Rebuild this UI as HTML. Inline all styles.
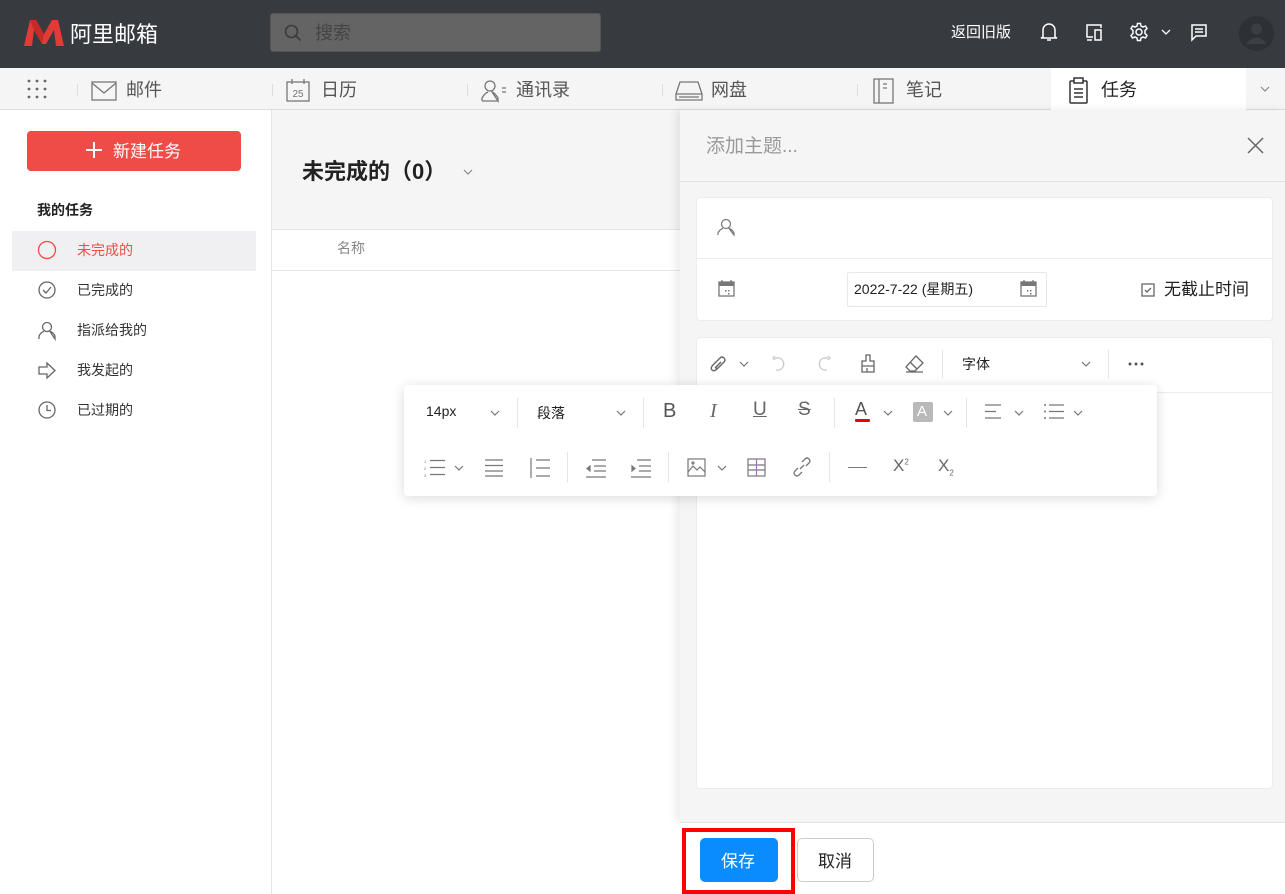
<!DOCTYPE html>
<html><head><meta charset="utf-8"><style>
*{margin:0;padding:0;box-sizing:border-box}
body{width:1285px;height:894px;overflow:hidden;font-family:"Liberation Sans","Noto Sans CJK SC",sans-serif;background:#fff;position:relative;color:#333}
.a{position:absolute}
svg{position:absolute;overflow:visible}
.t{position:absolute;white-space:nowrap;margin-top:-2px}
</style></head><body>
<!-- top bar -->
<div class="a" style="left:0;top:0;width:1285px;height:68px;background:#373b40"></div>
<svg style="left:22px;top:18px" width="44" height="30" viewBox="0 0 44 30"><path d="M2 28 L8 2 L14 2 L22 16 L30 2 L36 2 L42 28 L34 28 L32 12 L24 26 L20 26 L12 12 L10 28 Z" fill="#e23a36"/><path d="M8 2 L14 2 L22 16 L20 26 L12 12Z" fill="#c42a27"/></svg>
<div class="t" style="left:70px;top:19px;font-size:22px;color:#fff">阿里邮箱</div>
<div class="a" style="left:270px;top:13px;width:331px;height:39px;background:#646464;border-radius:3px;border:1px solid #555"></div>
<svg style="left:284px;top:24px" width="18" height="18"><circle cx="7.5" cy="7.5" r="6" fill="none" stroke="#3a3a3a" stroke-width="1.6"/><path d="M12 12 L16.5 16.5" stroke="#3a3a3a" stroke-width="1.6"/></svg>
<div class="t" style="left:315px;top:21px;font-size:18px;color:#444">搜索</div>
<div class="t" style="left:951px;top:23px;font-size:15px;color:#fff">返回旧版</div>
<svg style="left:1040px;top:22px" width="18" height="20" fill="none" stroke="#fff" stroke-width="1.5"><path d="M3 15 L3 8 A6 6 0 0 1 15 8 L15 15 L17 16 L1 16 Z M7 18 L11 18"/></svg>
<svg style="left:1085px;top:23px" width="20" height="18" fill="none" stroke="#fff" stroke-width="1.5"><path d="M8 14 L2 14 L2 2 L16 2 L16 5 M7 17 L2 17"/><rect x="10" y="7" width="6" height="10"/></svg>
<svg style="left:1129px;top:22px" width="20" height="20" fill="none" stroke="#fff" stroke-width="1.5"><circle cx="10" cy="10" r="3"/><path d="M8.5 1.5 L11.5 1.5 L12 4 L14 5 L16.5 4 L18 6.5 L16 8.5 L16 11.5 L18 13.5 L16.5 16 L14 15 L12 16 L11.5 18.5 L8.5 18.5 L8 16 L6 15 L3.5 16 L2 13.5 L4 11.5 L4 8.5 L2 6.5 L3.5 4 L6 5 L8 4 Z"/></svg>
<svg style="left:1161px;top:29px" width="10" height="6" fill="none" stroke="#fff" stroke-width="1.3"><path d="M1 1 L5 5 L9 1"/></svg>
<svg style="left:1190px;top:23px" width="18" height="18" fill="none" stroke="#fff" stroke-width="1.5"><path d="M2 2 L16 2 L16 13 L6 13 L2 17 Z M5 6 L13 6 M5 9 L13 9"/></svg>
<div class="a" style="left:1239px;top:16px;width:35px;height:35px;border-radius:50%;background:#2d3034"></div>
<svg style="left:1239px;top:16px" width="35" height="35"><circle cx="17.5" cy="13" r="5.5" fill="#3b3f44"/><path d="M7 28 Q17.5 15 28 28 Z" fill="#3b3f44"/></svg>

<!-- nav -->
<div class="a" style="left:0;top:68px;width:1285px;height:42px;background:#f5f5f5;border-bottom:1px solid #ddd"></div>
<div class="a" style="left:1051px;top:68px;width:195px;height:42px;background:#fff"></div>
<svg style="left:27px;top:79px" width="20" height="20" fill="#666"><circle cx="2" cy="2" r="1.4"/><circle cx="10" cy="2" r="1.4"/><circle cx="18" cy="2" r="1.4"/><circle cx="2" cy="10" r="1.4"/><circle cx="10" cy="10" r="1.4"/><circle cx="18" cy="10" r="1.4"/><circle cx="2" cy="18" r="1.4"/><circle cx="10" cy="18" r="1.4"/><circle cx="18" cy="18" r="1.4"/></svg>
<div class="a" style="left:77px;top:84px;width:1px;height:12px;background:#ddd"></div>
<div class="a" style="left:272px;top:84px;width:1px;height:12px;background:#ddd"></div>
<div class="a" style="left:467px;top:84px;width:1px;height:12px;background:#ddd"></div>
<div class="a" style="left:662px;top:84px;width:1px;height:12px;background:#ddd"></div>
<div class="a" style="left:857px;top:84px;width:1px;height:12px;background:#ddd"></div>
<svg style="left:91px;top:81px" width="26" height="20" fill="none" stroke="#777" stroke-width="1.3"><rect x="1" y="1" width="24" height="18"/><path d="M1 2 L13 12 L25 2"/></svg>
<div class="t" style="left:126px;top:78px;font-size:18px;color:#555">邮件</div>
<svg style="left:286px;top:78px" width="26" height="24" fill="none" stroke="#777" stroke-width="1.3"><rect x="1" y="4" width="22" height="19"/><path d="M6 1 L6 6 M18 1 L18 6"/><text x="12" y="19" font-size="10" fill="#777" stroke="none" text-anchor="middle" font-family="Liberation Sans">25</text></svg>
<div class="t" style="left:321px;top:78px;font-size:18px;color:#555">日历</div>
<svg style="left:481px;top:79px" width="28" height="24" fill="none" stroke="#777" stroke-width="1.3"><circle cx="9" cy="7" r="5"/><path d="M1 22 L1 19 Q4 14 7 13 M11 13 Q14 14 17 19 L17 22 Z M1 22 L17 22 M21 9 L25 9 M21 13 L25 13"/></svg>
<div class="t" style="left:516px;top:78px;font-size:18px;color:#555">通讯录</div>
<svg style="left:675px;top:80px" width="28" height="22" fill="none" stroke="#777" stroke-width="1.3"><path d="M5 2 L23 2 L27 14 L27 20 L1 20 L1 14 Z M1 14 L27 14 M4 17 L24 17"/></svg>
<div class="t" style="left:711px;top:78px;font-size:18px;color:#555">网盘</div>
<svg style="left:873px;top:78px" width="22" height="26" fill="none" stroke="#777" stroke-width="1.3"><rect x="1" y="1" width="19" height="24"/><path d="M6 1 L6 25 M10 6 L14 6 M10 10 L14 10"/></svg>
<div class="t" style="left:906px;top:78px;font-size:18px;color:#555">笔记</div>
<svg style="left:1068px;top:77px" width="22" height="28" fill="none" stroke="#333" stroke-width="1.5"><rect x="2" y="4" width="17" height="22" rx="1"/><rect x="6" y="1" width="9" height="5" fill="#fff"/><path d="M6 12 L15 12 M6 16 L15 16 M6 20 L15 20"/></svg>
<div class="t" style="left:1101px;top:78px;font-size:18px;color:#222">任务</div>
<svg style="left:1260px;top:86px" width="10" height="6" fill="none" stroke="#888" stroke-width="1.2"><path d="M1 1 L5 5 L9 1"/></svg>

<!-- sidebar -->
<div class="a" style="left:271px;top:110px;width:1px;height:784px;background:#e5e5e5"></div>
<div class="a" style="left:27px;top:131px;width:214px;height:40px;background:#ef4b47;border-radius:4px"></div>
<svg style="left:86px;top:142px" width="16" height="16" stroke="#fff" stroke-width="2"><path d="M8 0 L8 16 M0 8 L16 8"/></svg>
<div class="t" style="left:113px;top:139px;font-size:17px;color:#fff">新建任务</div>
<div class="t" style="left:37px;top:202px;font-size:14px;font-weight:bold;color:#222">我的任务</div>
<div class="a" style="left:12px;top:231px;width:244px;height:40px;background:#f0f0f2"></div>
<svg style="left:38px;top:241px" width="19" height="19" fill="none" stroke="#ef4b47" stroke-width="1.3"><circle cx="9" cy="9" r="8.5"/></svg>
<div class="t" style="left:77px;top:242px;font-size:14px;color:#ef4b47">未完成的</div>
<svg style="left:38px;top:281px" width="19" height="19" fill="none" stroke="#666" stroke-width="1.3"><circle cx="9" cy="9" r="8"/><path d="M5 9 L8 12 L13 6"/></svg>
<div class="t" style="left:77px;top:282px;font-size:14px;color:#333">已完成的</div>
<svg style="left:38px;top:321px" width="19" height="19" fill="none" stroke="#666" stroke-width="1.3"><circle cx="9" cy="6" r="4.5"/><path d="M1 18 L1 15 Q3 11 6 10.5 M12 10.5 Q15 11 17 15 L17 18 Z"/></svg>
<div class="t" style="left:77px;top:322px;font-size:14px;color:#333">指派给我的</div>
<svg style="left:38px;top:361px" width="19" height="19" fill="none" stroke="#666" stroke-width="1.3"><path d="M1 6 L9 6 L9 2 L17 9.5 L9 17 L9 13 L1 13 Z"/></svg>
<div class="t" style="left:77px;top:362px;font-size:14px;color:#333">我发起的</div>
<svg style="left:38px;top:401px" width="19" height="19" fill="none" stroke="#666" stroke-width="1.3"><circle cx="9" cy="9" r="8"/><path d="M9 4 L9 9.5 L13 9.5"/></svg>
<div class="t" style="left:77px;top:402px;font-size:14px;color:#333">已过期的</div>

<!-- middle -->
<div class="a" style="left:272px;top:110px;width:408px;height:120px;background:#f5f5f5;border-bottom:1px solid #e5e5e5"></div>
<div class="t" style="left:302px;top:156px;font-size:22px;font-weight:bold;color:#222">未完成的（0）</div>
<svg style="left:463px;top:169px" width="10" height="6" fill="none" stroke="#888" stroke-width="1.2"><path d="M1 1 L5 5 L9 1"/></svg>
<div class="t" style="left:337px;top:240px;font-size:14px;color:#888">名称</div>
<div class="a" style="left:272px;top:270px;width:408px;height:1px;background:#e8e8e8"></div>

<!-- right panel -->
<div class="a" style="left:680px;top:110px;width:605px;height:712px;background:#f5f5f5;box-shadow:-4px 0 8px rgba(0,0,0,.08)"></div>
<div class="a" style="left:680px;top:822px;width:605px;height:72px;background:#fff;border-top:1px solid #e5e5e5"></div>
<div class="t" style="left:706px;top:133px;font-size:19px;color:#999">添加主题...</div>
<svg style="left:1247px;top:137px" width="17" height="17" stroke="#666" stroke-width="1.5"><path d="M1 1 L16 16 M16 1 L1 16"/></svg>
<div class="a" style="left:680px;top:181px;width:605px;height:1px;background:#e2e2e2"></div>
<div class="a" style="left:696px;top:197px;width:577px;height:124px;background:#fff;border:1px solid #ececec;border-radius:4px"></div>
<div class="a" style="left:697px;top:258px;width:575px;height:1px;background:#ececec"></div>
<svg style="left:717px;top:218px" width="18" height="18" fill="none" stroke="#777" stroke-width="1.2"><circle cx="9" cy="6" r="4.5"/><path d="M1 17 L1 15 Q3 11 6 10.5 M12 10.5 Q15 11 17 15 L17 17 Z"/></svg>
<svg style="left:718px;top:280px" width="17" height="17"><rect x="1" y="2" width="15" height="14" fill="none" stroke="#777" stroke-width="1.3"/><rect x="1" y="2" width="15" height="4" fill="#777"/><path d="M4 0 L4 3 M13 0 L13 3" stroke="#777" stroke-width="1.3"/><rect x="7" y="10" width="1.5" height="1.5" fill="#777"/><rect x="10" y="10" width="1.5" height="1.5" fill="#777"/><rect x="10" y="13" width="1.5" height="1.5" fill="#777"/></svg>
<div class="a" style="left:847px;top:272px;width:200px;height:35px;border:1px solid #e8e8e8;border-radius:2px;background:#fff"></div>
<div class="t" style="left:854px;top:281px;font-size:14px;color:#222">2022-7-22 (星期五)</div>
<svg style="left:1020px;top:280px" width="17" height="17"><rect x="1" y="2" width="15" height="14" fill="none" stroke="#777" stroke-width="1.3"/><rect x="1" y="2" width="15" height="4" fill="#777"/><path d="M4 0 L4 3 M13 0 L13 3" stroke="#777" stroke-width="1.3"/><rect x="7" y="10" width="1.5" height="1.5" fill="#777"/><rect x="10" y="10" width="1.5" height="1.5" fill="#777"/><rect x="10" y="13" width="1.5" height="1.5" fill="#777"/></svg>
<svg style="left:1141px;top:283px" width="14" height="14" fill="none" stroke="#666" stroke-width="1.3"><rect x="1" y="1" width="12" height="12"/><path d="M4 7 L6 9 L10 5"/></svg>
<div class="t" style="left:1164px;top:277px;font-size:17px;color:#222">无截止时间</div>

<div class="a" style="left:696px;top:337px;width:577px;height:452px;background:#fff;border:1px solid #ececec;border-radius:4px"></div>
<div class="a" style="left:697px;top:392px;width:575px;height:1px;background:#ececec"></div>
<svg style="left:710px;top:355px" width="18" height="18" fill="none" stroke="#666" stroke-width="1.4"><path d="M14 7 L7 14 Q4 17 2 15 Q0 13 3 10 L10 3 Q12 1 14 3 Q16 5 14 7 L8 13 Q6 14 5.5 12.5 L11 7"/></svg>
<svg style="left:739px;top:361px" width="10" height="6" fill="none" stroke="#777" stroke-width="1.2"><path d="M1 1 L5 5 L9 1"/></svg>
<svg style="left:772px;top:356px" width="14" height="16" fill="none" stroke="#ccc" stroke-width="1.4"><path d="M3 2 L7 2 A6 6 0 1 1 4 14 M3 0 L1 2 L3 4"/></svg>
<svg style="left:817px;top:356px" width="14" height="16" fill="none" stroke="#ccc" stroke-width="1.4"><path d="M11 2 L7 2 A6 6 0 1 0 10 14 M11 0 L13 2 L11 4"/></svg>
<svg style="left:860px;top:354px" width="16" height="20" fill="none" stroke="#666" stroke-width="1.3"><path d="M6 1 L10 1 L10 7 L14 7 L14 18 L2 18 L2 7 L6 7 Z M2 12 L14 12 M7 18 L7 14"/></svg>
<svg style="left:904px;top:355px" width="20" height="18" fill="none" stroke="#666" stroke-width="1.3"><path d="M12 1 L19 8 L11 16 L6 16 L2 12 Z M6 7 L13 14 M2 17 L19 17"/></svg>
<div class="a" style="left:942px;top:350px;width:1px;height:28px;background:#e5e5e5"></div>
<div class="t" style="left:962px;top:356px;font-size:14px;color:#222">字体</div>
<svg style="left:1081px;top:361px" width="10" height="6" fill="none" stroke="#777" stroke-width="1.2"><path d="M1 1 L5 5 L9 1"/></svg>
<div class="a" style="left:1108px;top:350px;width:1px;height:28px;background:#e5e5e5"></div>
<svg style="left:1128px;top:362px" width="16" height="4" fill="#555"><circle cx="2" cy="2" r="1.5"/><circle cx="8" cy="2" r="1.5"/><circle cx="14" cy="2" r="1.5"/></svg>

<!-- popup toolbar -->
<div class="a" style="left:404px;top:385px;width:753px;height:111px;background:#fff;border-radius:4px;box-shadow:0 2px 12px rgba(0,0,0,.15)"></div>
<div class="t" style="left:426px;top:405px;font-size:14px;color:#222">14px</div>
<svg style="left:490px;top:410px" width="10" height="6" fill="none" stroke="#777" stroke-width="1.2"><path d="M1 1 L5 5 L9 1"/></svg>
<div class="a" style="left:517px;top:398px;width:1px;height:30px;background:#e5e5e5"></div>
<div class="t" style="left:537px;top:405px;font-size:14px;color:#222">段落</div>
<svg style="left:616px;top:410px" width="10" height="6" fill="none" stroke="#777" stroke-width="1.2"><path d="M1 1 L5 5 L9 1"/></svg>
<div class="a" style="left:643px;top:398px;width:1px;height:30px;background:#e5e5e5"></div>
<div class="t" style="left:663px;top:402px;font-size:20px;color:#555">B</div>
<div class="t" style="left:710px;top:402px;font-size:20px;color:#666;font-style:italic;font-family:'Liberation Serif',serif">I</div>
<div class="t" style="left:753px;top:401px;font-size:19px;color:#666;text-decoration:underline">U</div>
<div class="t" style="left:798px;top:401px;font-size:19px;color:#666;text-decoration:line-through">S</div>
<div class="a" style="left:834px;top:398px;width:1px;height:30px;background:#e5e5e5"></div>
<div class="t" style="left:855px;top:401px;font-size:18px;color:#555">A</div>
<div class="a" style="left:855px;top:419px;width:15px;height:3px;background:#e00;border-radius:1px"></div>
<svg style="left:883px;top:410px" width="10" height="6" fill="none" stroke="#777" stroke-width="1.2"><path d="M1 1 L5 5 L9 1"/></svg>
<div class="a" style="left:913px;top:402px;width:20px;height:20px;background:#b9b9b9;border-radius:2px"></div>
<div class="t" style="left:917px;top:405px;font-size:15px;color:#fff">A</div>
<svg style="left:943px;top:410px" width="10" height="6" fill="none" stroke="#777" stroke-width="1.2"><path d="M1 1 L5 5 L9 1"/></svg>
<div class="a" style="left:966px;top:398px;width:1px;height:30px;background:#e5e5e5"></div>
<svg style="left:985px;top:404px" width="18" height="16" stroke="#777" stroke-width="1.2"><path d="M0 1 L16 1 M0 7.5 L11 7.5 M0 14 L16 14"/></svg>
<svg style="left:1014px;top:410px" width="10" height="6" fill="none" stroke="#777" stroke-width="1.2"><path d="M1 1 L5 5 L9 1"/></svg>
<svg style="left:1044px;top:404px" width="20" height="16" stroke="#777" stroke-width="1.2"><path d="M5 1 L20 1 M5 7.5 L20 7.5 M5 14 L20 14"/><circle cx="1" cy="1" r="1" fill="#777" stroke="none"/><circle cx="1" cy="7.5" r="1" fill="#777" stroke="none"/><circle cx="1" cy="14" r="1" fill="#777" stroke="none"/></svg>
<svg style="left:1073px;top:410px" width="10" height="6" fill="none" stroke="#777" stroke-width="1.2"><path d="M1 1 L5 5 L9 1"/></svg>

<svg style="left:424px;top:459px" width="22" height="18" stroke="#777" stroke-width="1.2"><path d="M6 1.5 L21 1.5 M6 8.5 L21 8.5 M6 15.5 L21 15.5"/><text x="0" y="4" font-size="4" fill="#777" stroke="none">1</text><text x="0" y="11" font-size="4" fill="#777" stroke="none">2</text><text x="0" y="18" font-size="4" fill="#777" stroke="none">3</text></svg>
<svg style="left:454px;top:465px" width="10" height="6" fill="none" stroke="#777" stroke-width="1.2"><path d="M1 1 L5 5 L9 1"/></svg>
<svg style="left:485px;top:459px" width="18" height="18" stroke="#777" stroke-width="1.2"><path d="M0 1 L18 1 M0 6.5 L18 6.5 M0 12 L18 12 M0 17 L18 17"/></svg>
<svg style="left:529px;top:458px" width="22" height="20" stroke="#777" stroke-width="1.2"><path d="M2 0 L2 20 M7 2 L21 2 M7 10 L21 10 M7 18 L21 18"/></svg>
<div class="a" style="left:567px;top:452px;width:1px;height:30px;background:#e5e5e5"></div>
<svg style="left:586px;top:458px" width="20" height="20" stroke="#777" stroke-width="1.2"><path d="M6 2 L20 2 M8 8 L20 8 M8 13 L20 13 M0 19 L20 19"/><path d="M4 8 L1 10.5 L4 13Z" fill="#777"/></svg>
<svg style="left:631px;top:458px" width="20" height="20" stroke="#777" stroke-width="1.2"><path d="M6 2 L20 2 M8 8 L20 8 M8 13 L20 13 M0 19 L20 19"/><path d="M1 8 L4 10.5 L1 13Z" fill="#777"/></svg>
<div class="a" style="left:668px;top:452px;width:1px;height:30px;background:#e5e5e5"></div>
<svg style="left:687px;top:458px" width="20" height="20" fill="none" stroke="#777" stroke-width="1.2"><rect x="1" y="1" width="17" height="17"/><path d="M1 14 L6 8 L10 12 L13 9 L18 14"/><circle cx="6" cy="5" r="1"/></svg>
<svg style="left:717px;top:465px" width="10" height="6" fill="none" stroke="#777" stroke-width="1.2"><path d="M1 1 L5 5 L9 1"/></svg>
<svg style="left:747px;top:458px" width="20" height="20" fill="none" stroke="#777" stroke-width="1.2"><rect x="1" y="1" width="17" height="17"/><path d="M1 7 L18 7 M1 12 L18 12"/><path d="M9.5 1 L9.5 18" stroke="#a070b0"/></svg>
<svg style="left:792px;top:457px" width="20" height="20" fill="none" stroke="#777" stroke-width="1.3"><path d="M8 12 L12 8 M10 5 L13 2 Q15 0 17 2 Q19 4 17 6 L14 9 M10 15 L7 18 Q5 20 3 18 Q1 16 3 14 L6 11"/></svg>
<div class="a" style="left:829px;top:452px;width:1px;height:30px;background:#e5e5e5"></div>
<div class="a" style="left:848px;top:467px;width:19px;height:1px;background:#777"></div>
<div class="t" style="left:893px;top:458px;font-size:17px;color:#666">X<sup style="font-size:8px">2</sup></div>
<div class="t" style="left:938px;top:458px;font-size:17px;color:#666">X<sub style="font-size:8px">2</sub></div>

<!-- footer -->
<div class="a" style="left:682px;top:828px;width:113px;height:66px;border:4px solid #f00"></div>
<div class="a" style="left:700px;top:838px;width:78px;height:44px;background:#0a8cff;border-radius:5px"></div>
<div class="t" style="left:721px;top:849px;font-size:17px;color:#fff">保存</div>
<div class="a" style="left:797px;top:838px;width:77px;height:44px;background:#fff;border:1px solid #ccc;border-radius:5px"></div>
<div class="t" style="left:818px;top:849px;font-size:17px;color:#222">取消</div>
</body></html>
